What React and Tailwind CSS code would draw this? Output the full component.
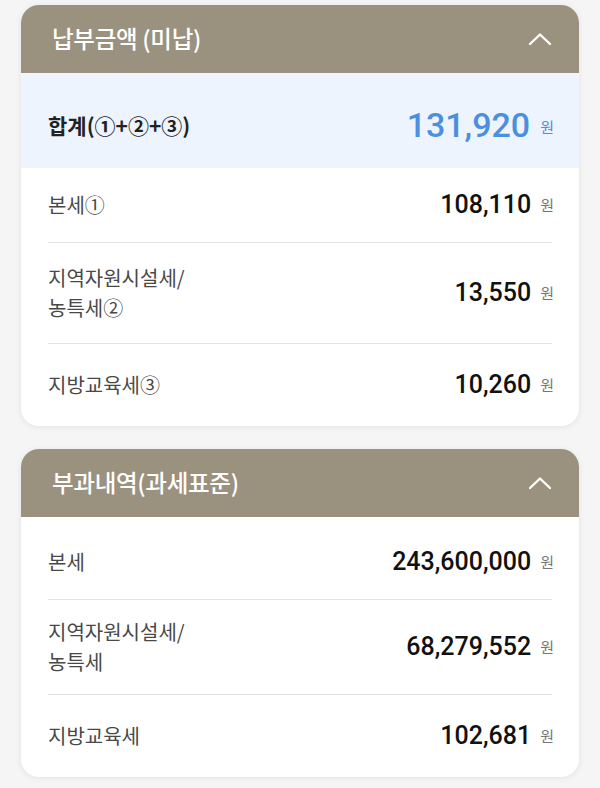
import React from "react";

const KR = "font-['Noto_Sans_CJK_KR','Noto_Sans',sans-serif]";
const NUM = "font-['Roboto','Noto_Sans_CJK_KR',sans-serif]";

function Chevron() {
  return (
    <svg width="24" height="14" viewBox="0 0 24 14" fill="none">
      <path d="M2 12L12 2.5L22 12" stroke="white" strokeWidth="2.4" strokeLinecap="round" strokeLinejoin="round" />
    </svg>
  );
}

function Header({ title }) {
  return (
    <div className="h-[68px] bg-[#9b917f] flex items-center justify-between pl-[31px] pr-[27px]">
      <span className={`${KR} text-[23.5px] font-medium text-white tracking-[-0.3px]`}>{title}</span>
      <Chevron />
    </div>
  );
}

function Row({ label, value, h, last, pt }) {
  return (
    <div className={`${h} ${pt || ""} mx-[27px] flex items-center justify-between ${last ? "" : "border-b border-[#e3e3e3]"}`}>
      <div className={`${KR} text-[20px] leading-[30px] text-[#484848]`}>
        {label.map((l, i) => (
          <div key={i}>{l}</div>
        ))}
      </div>
      <div className="flex items-center">
        <span className={`${NUM} text-[25px] font-medium text-[#111]`}>{value}</span>
        <span className={`${KR} text-[15px] text-[#777] ml-[9px] mr-[-2px]`}>원</span>
      </div>
    </div>
  );
}

export default function App() {
  return (
    <div className="min-h-[788px] bg-[#f5f5f5] px-[21px] pt-[5px] pb-[12px] flex flex-col gap-[23px]">
      <div className="bg-white rounded-[18px] overflow-hidden shadow-[0_1px_6px_rgba(0,0,0,0.08)]">
        <Header title="납부금액 (미납)" />
        <div className="h-[95px] pt-[10px] bg-[#eef4fd] px-[27px] flex items-center justify-between">
          <span className={`${KR} text-[21px] font-semibold text-[#222]`}>합계(①+②+③)</span>
          <div className="flex items-center">
            <span className={`${NUM} text-[34px] font-medium text-[#4a8fe0]`}>131,920</span>
            <span className={`${KR} text-[15px] text-[#4a8fe0] ml-[10px] mr-[-2px] mt-[4px]`}>원</span>
          </div>
        </div>
        <Row label={["본세①"]} value="108,110" h="h-[75px]" />
        <Row label={["지역자원시설세/", "농특세②"]} value="13,550" h="h-[101px]" />
        <Row label={["지방교육세③"]} value="10,260" h="h-[82px]" last />
      </div>

      <div className="bg-white rounded-[18px] overflow-hidden shadow-[0_1px_6px_rgba(0,0,0,0.08)]">
        <Header title="부과내역(과세표준)" />
        <Row label={["본세"]} value="243,600,000" h="h-[83px]" pt="pt-[8px]" />
        <Row label={["지역자원시설세/", "농특세"]} value="68,279,552" h="h-[95px]" />
        <Row label={["지방교육세"]} value="102,681" h="h-[82px]" last />
      </div>
    </div>
  );
}
